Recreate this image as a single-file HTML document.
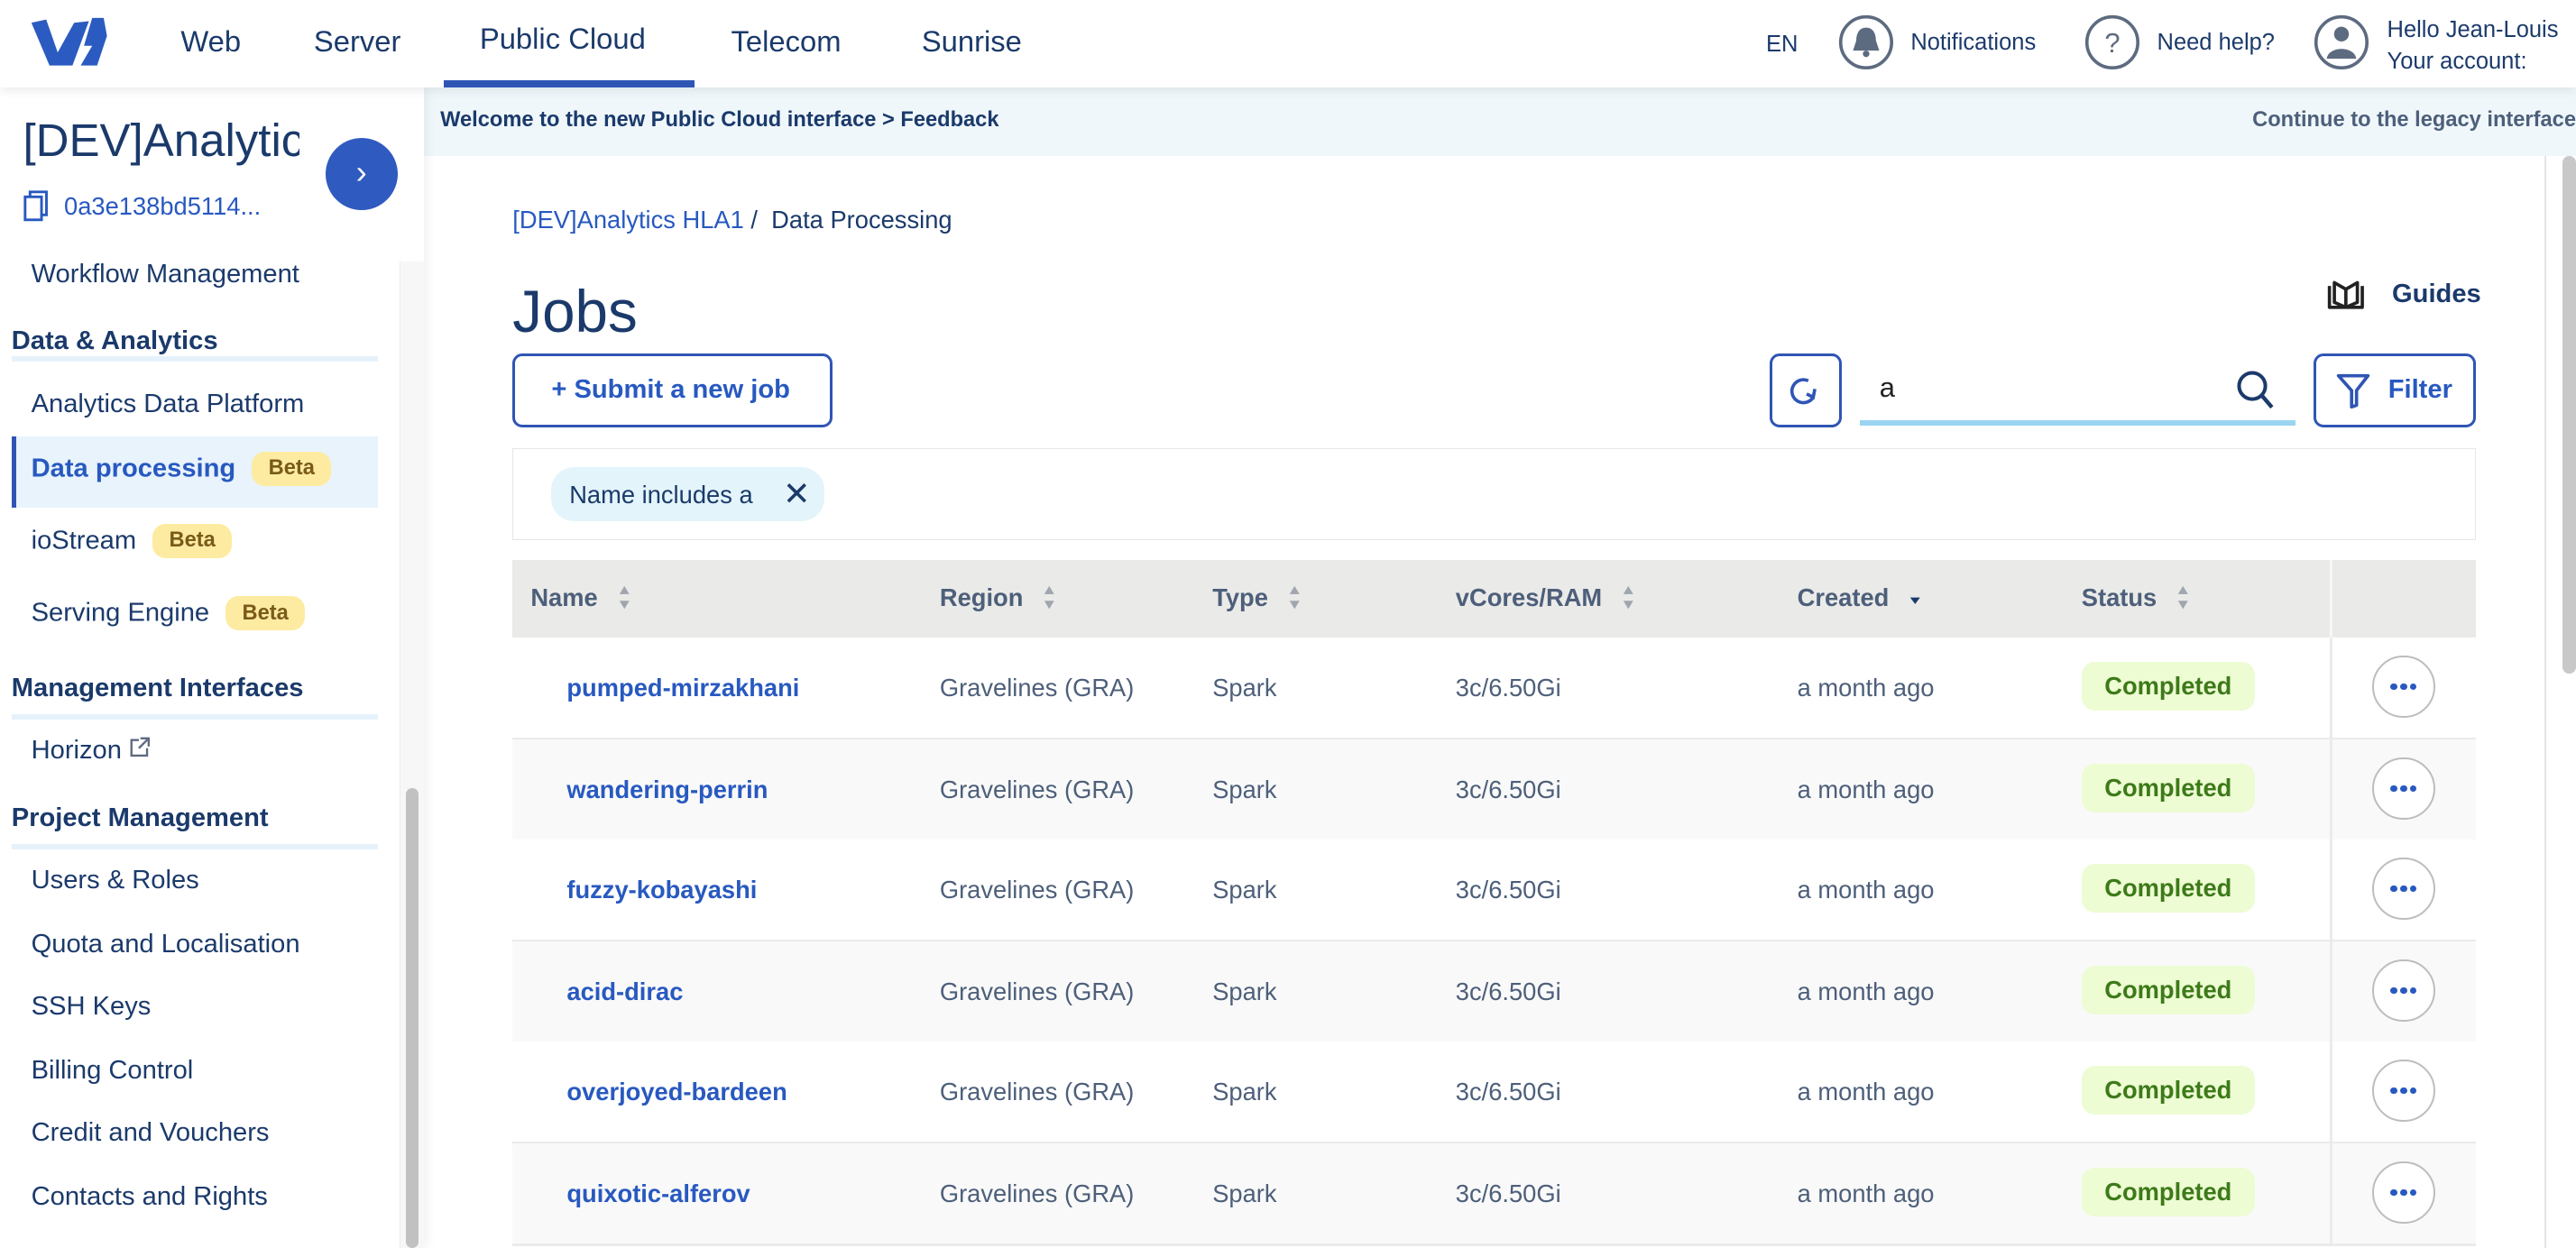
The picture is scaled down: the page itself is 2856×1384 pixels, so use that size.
<!DOCTYPE html>
<html><head><meta charset="utf-8">
<style>
html,body{margin:0;padding:0;}
body{width:2856px;height:1384px;overflow:hidden;background:#fff;font-family:"Liberation Sans",sans-serif;color:#1b3a6b;}
#root{position:relative;width:1568px;height:760px;zoom:1.82143;overflow:hidden;}
.a{position:absolute;white-space:nowrap;}
.nav{top:15px;font-size:18px;color:#1b3a6b;}
.side-h{left:7px;font-size:16px;font-weight:bold;color:#1b3a6b;}
.side-l{left:7px;width:223px;height:3px;background:#e6f2fb;}
.side-i{left:19px;font-size:16px;color:#1b3a6b;}
.beta{display:inline-block;background:#fdeba1;color:#7a5a1a;font-size:13px;font-weight:bold;padding:3px 10px;border-radius:8px;margin-left:10px;vertical-align:1px;}
.th{top:355px;font-size:15px;font-weight:bold;color:#4d5f7a;}
.sort{display:inline-block;width:8px;height:16px;margin-left:12px;vertical-align:-3px;}
.row{position:absolute;left:312px;width:1195px;height:61px;border-bottom:2px solid #ebebeb;}
.row span{position:absolute;top:22px;font-size:15px;color:#4d5f7a;}
.row .n{left:33px;color:#2859c0;font-weight:bold;}
.row .bd{left:955px;top:15px;background:#edfcd3;color:#3d7a19;font-weight:bold;font-size:15px;padding:6px 14px;border-radius:8px;}
.row .sep{left:1106px;top:0;width:2px;height:61px;background:#ebebeb;}
.row .dots{left:1132px;top:11px;width:36px;height:36px;border:1.5px solid #bdbdbd;border-radius:50%;background:#fff;}
.row .dots i{position:absolute;top:16px;width:4px;height:4px;border-radius:50%;background:#2859c0;}
.btn{position:absolute;border:2px solid #2f55b4;border-radius:6px;box-sizing:border-box;}
</style></head><body><div id="root">

<!-- header -->
<div class="a" style="left:0;top:0;width:1568px;height:53px;background:#fff;box-shadow:0 2px 6px rgba(0,0,0,0.08);z-index:3;">
 <svg class="a" style="left:18px;top:10px" width="48" height="32" viewBox="0 0 48 32">
  <path d="M1 4 L10 2 L17 22 L27 4 L36 3 L26 30 L12 30 Z" fill="#2b5bc0"/>
  <path d="M38 1 L45 1 L47 12 L41 30 L31 30 L38 18 L33 18 Z" fill="#2b5bc0"/>
 </svg>
 <div class="a nav" style="left:110px">Web</div>
 <div class="a nav" style="left:191px">Server</div>
 <div class="a nav" style="left:292px;top:13px">Public Cloud</div>
 <div class="a" style="left:270px;top:49px;width:153px;height:4px;background:#2f55b4"></div>
 <div class="a nav" style="left:445px">Telecom</div>
 <div class="a nav" style="left:561px">Sunrise</div>
 <div class="a" style="left:1075px;top:19px;font-size:14px;">EN</div>
 <svg class="a" style="left:1119px;top:9px" width="34" height="34" viewBox="0 0 34 34"><circle cx="17" cy="17" r="15.5" fill="none" stroke="#5d6b80" stroke-width="2"/><path d="M17 8 C12 8 11 13 11 16 L9 22 L25 22 L23 16 C23 13 22 8 17 8Z" fill="#5d6b80"/><circle cx="17" cy="24" r="2" fill="#5d6b80"/></svg>
 <div class="a" style="left:1163px;top:18px;font-size:14px;">Notifications</div>
 <svg class="a" style="left:1269px;top:9px" width="34" height="34" viewBox="0 0 34 34"><circle cx="17" cy="17" r="15.5" fill="none" stroke="#5d6b80" stroke-width="2"/><text x="17" y="23" text-anchor="middle" font-family="Liberation Sans" font-size="17" fill="#5d6b80">?</text></svg>
 <div class="a" style="left:1313px;top:18px;font-size:14px;">Need help?</div>
 <svg class="a" style="left:1408px;top:9px" width="34" height="34" viewBox="0 0 34 34"><circle cx="17" cy="17" r="15.5" fill="none" stroke="#5d6b80" stroke-width="2"/><circle cx="17" cy="12" r="4.5" fill="#5d6b80"/><path d="M8 27 C9 19 25 19 26 27 Z" fill="#5d6b80"/></svg>
 <div class="a" style="left:1453px;top:9px;font-size:14px;line-height:19px;">Hello Jean-Louis<br>Your account:</div>
</div>

<!-- sidebar -->
<div class="a" style="left:0;top:53px;width:258px;height:707px;background:#fff;box-shadow:2px 0 6px rgba(0,0,0,0.06);z-index:2;">
 <div class="a" style="left:14px;top:16px;width:168px;overflow:hidden;font-size:28px;color:#1b3a6b;">[DEV]Analytics</div>
 <div class="a" style="left:198px;top:31px;width:44px;height:44px;border-radius:50%;background:#2f5ac0;color:#fff;text-align:center;line-height:42px;font-size:20px;">&#8250;</div>
 <svg class="a" style="left:14px;top:63px" width="16" height="20" viewBox="0 0 16 20"><rect x="1" y="4" width="10" height="14" fill="none" stroke="#2859c0" stroke-width="1.6"/><path d="M4 4 V1 H14 V15 H11" fill="none" stroke="#2859c0" stroke-width="1.6"/></svg>
 <div class="a" style="left:39px;top:64px;font-size:15px;color:#2859c0;">0a3e138bd5114...</div>
 <div class="a" style="left:0;top:106px;width:243px;height:601px;overflow:hidden;">
  <div class="a side-i" style="top:-1px">Workflow Management</div>
  <div class="a side-h" style="top:40px">Data &amp; Analytics</div>
  <div class="a side-l" style="top:58px"></div>
  <div class="a side-i" style="top:78px">Analytics Data Platform</div>
  <div class="a" style="left:7px;top:107px;width:223px;height:43px;background:#e8f3fb;"></div>
  <div class="a" style="left:7px;top:107px;width:3px;height:43px;background:#2f55b4;"></div>
  <div class="a side-i" style="top:116px;color:#2859c0;font-weight:bold;">Data processing<span class="beta">Beta</span></div>
  <div class="a side-i" style="top:160px">ioStream<span class="beta">Beta</span></div>
  <div class="a side-i" style="top:204px">Serving Engine<span class="beta">Beta</span></div>
  <div class="a side-h" style="top:251px">Management Interfaces</div>
  <div class="a side-l" style="top:276px"></div>
  <div class="a side-i" style="top:289px">Horizon <svg width="13" height="13" viewBox="0 0 13 13" style="vertical-align:0"><path d="M6 2 H1.5 V11.5 H11 V7 M7 1 H12 V6 M12 1 L6 7" fill="none" stroke="#5d6b80" stroke-width="1.3"/></svg></div>
  <div class="a side-h" style="top:330px">Project Management</div>
  <div class="a side-l" style="top:355px"></div>
  <div class="a side-i" style="top:368px">Users &amp; Roles</div>
  <div class="a side-i" style="top:407px">Quota and Localisation</div>
  <div class="a side-i" style="top:445px">SSH Keys</div>
  <div class="a side-i" style="top:484px">Billing Control</div>
  <div class="a side-i" style="top:522px">Credit and Vouchers</div>
  <div class="a side-i" style="top:561px">Contacts and Rights</div>
 </div>
 <div class="a" style="left:243px;top:106px;width:15px;height:601px;background:#f7f7f7;border-left:1px solid #ececec;"></div>
 <div class="a" style="left:247px;top:427px;width:8px;height:280px;background:#c1c1c1;border-radius:4px;"></div>
</div>

<!-- banner -->
<div class="a" style="left:258px;top:53px;width:1310px;height:42px;background:#eff7fb;">
 <div class="a" style="left:10px;top:13px;font-size:13px;font-weight:bold;color:#1b3a6b;">Welcome to the new Public Cloud interface &gt; Feedback</div>
 <div class="a" style="right:0;top:13px;font-size:13px;color:#4d5f7a;font-weight:bold;">Continue to the legacy interface</div>
</div>
<div class="a" style="left:1549px;top:95px;width:1px;height:665px;background:#e5e5e5"></div>
<div class="a" style="left:1560px;top:95px;width:8px;height:315px;background:#c8c8c8;border-radius:4px"></div>

<!-- main -->
<div class="a" style="left:312px;top:125px;font-size:15px;"><span style="color:#2859c0">[DEV]Analytics HLA1</span> / &nbsp;Data Processing</div>
<div class="a" style="left:312px;top:169px;font-size:36px;color:#1b3a6b;">Jobs</div>
<svg class="a" style="left:1416px;top:169px" width="24" height="20" viewBox="0 0 24 20"><path d="M2 5 V18 H22 V5 M5 3 V15 L12 18 L19 15 V3 L12 7 L5 3 Z M12 7 V18" fill="none" stroke="#222" stroke-width="2" stroke-linejoin="round"/></svg>
<div class="a" style="left:1456px;top:170px;font-size:16px;font-weight:bold;">Guides</div>

<div class="btn" style="left:312px;top:215px;width:195px;height:45px;"><div class="a" style="left:22px;top:12px;font-size:16px;font-weight:bold;color:#2859c0;">+ Submit a new job</div></div>
<div class="btn" style="left:1077px;top:215px;width:44px;height:45px;"><svg class="a" style="left:10px;top:11px" width="20" height="20" viewBox="0 0 20 20"><path d="M15 14 A7 7 0 1 1 12 4" fill="none" stroke="#2f55b4" stroke-width="2"/><path d="M16 9 L15 14 L11 12" fill="none" stroke="#2f55b4" stroke-width="2"/></svg></div>
<div class="a" style="left:1144px;top:226px;font-size:17px;color:#222;">a</div>
<div class="a" style="left:1132px;top:256px;width:265px;height:3px;background:#9ad4f0;"></div>
<svg class="a" style="left:1360px;top:224px" width="26" height="26" viewBox="0 0 26 26"><circle cx="11" cy="11" r="8" fill="none" stroke="#1b3a6b" stroke-width="2.2"/><path d="M17 17 L23 24" stroke="#1b3a6b" stroke-width="2.4"/></svg>
<div class="btn" style="left:1408px;top:215px;width:99px;height:45px;"><svg class="a" style="left:12px;top:10px" width="22" height="22" viewBox="0 0 22 22"><path d="M2 2 H20 L13 11 V20 L10 21 V11 Z" fill="none" stroke="#2f55b4" stroke-width="2" stroke-linejoin="round"/></svg><div class="a" style="left:44px;top:12px;font-size:16px;font-weight:bold;color:#2859c0;">Filter</div></div>

<div class="a" style="left:312px;top:273px;width:1195px;height:56px;border:1px solid #e6e6e6;box-sizing:border-box;">
 <div class="a" style="left:23px;top:11px;height:33px;width:166px;background:#e3f4fb;border-radius:14px;">
  <span class="a" style="left:11px;top:8px;font-size:15px;color:#1b3a6b;">Name includes a</span>
  <span class="a" style="left:141px;top:4px;font-size:20px;color:#1b3a6b;">&#x2715;</span>
 </div>
</div>

<div class="a" style="left:312px;top:341px;width:1195px;height:47px;background:#eaeae8;"></div>
<div class="a" style="left:1418px;top:341px;width:2px;height:47px;background:#fff;opacity:.6"></div>
<svg width="0" height="0" style="position:absolute"><defs><symbol id="s" viewBox="0 0 8 16"><path d="M4 1 L7 6 H1Z M4 15 L7 10 H1Z" fill="#a0a6ae"/></symbol></defs></svg>
<div class="a th" style="left:323px">Name<svg class="sort"><use href="#s"/></svg></div>
<div class="a th" style="left:572px">Region<svg class="sort"><use href="#s"/></svg></div>
<div class="a th" style="left:738px">Type<svg class="sort"><use href="#s"/></svg></div>
<div class="a th" style="left:886px">vCores/RAM<svg class="sort"><use href="#s"/></svg></div>
<div class="a th" style="left:1094px">Created<svg class="sort" viewBox="0 0 8 16"><path d="M1 8 H7 L4 12Z" fill="#1b3a6b"/></svg></div>
<div class="a th" style="left:1267px">Status<svg class="sort"><use href="#s"/></svg></div>

<div class="row" style="top:388px;background:#fff"><span class="n">pumped-mirzakhani</span><span style="left:260px">Gravelines (GRA)</span><span style="left:426px">Spark</span><span style="left:574px">3c/6.50Gi</span><span style="left:782px">a month ago</span><span class="bd">Completed</span><span class="sep"></span><span class="dots"><i style="left:10px"></i><i style="left:16px"></i><i style="left:22px"></i></span></div>
<div class="row" style="top:450px;background:#f9f9f9"><span class="n">wandering-perrin</span><span style="left:260px">Gravelines (GRA)</span><span style="left:426px">Spark</span><span style="left:574px">3c/6.50Gi</span><span style="left:782px">a month ago</span><span class="bd">Completed</span><span class="sep"></span><span class="dots"><i style="left:10px"></i><i style="left:16px"></i><i style="left:22px"></i></span></div>
<div class="row" style="top:511px;background:#fff"><span class="n">fuzzy-kobayashi</span><span style="left:260px">Gravelines (GRA)</span><span style="left:426px">Spark</span><span style="left:574px">3c/6.50Gi</span><span style="left:782px">a month ago</span><span class="bd">Completed</span><span class="sep"></span><span class="dots"><i style="left:10px"></i><i style="left:16px"></i><i style="left:22px"></i></span></div>
<div class="row" style="top:573px;background:#f9f9f9"><span class="n">acid-dirac</span><span style="left:260px">Gravelines (GRA)</span><span style="left:426px">Spark</span><span style="left:574px">3c/6.50Gi</span><span style="left:782px">a month ago</span><span class="bd">Completed</span><span class="sep"></span><span class="dots"><i style="left:10px"></i><i style="left:16px"></i><i style="left:22px"></i></span></div>
<div class="row" style="top:634px;background:#fff"><span class="n">overjoyed-bardeen</span><span style="left:260px">Gravelines (GRA)</span><span style="left:426px">Spark</span><span style="left:574px">3c/6.50Gi</span><span style="left:782px">a month ago</span><span class="bd">Completed</span><span class="sep"></span><span class="dots"><i style="left:10px"></i><i style="left:16px"></i><i style="left:22px"></i></span></div>
<div class="row" style="top:696px;background:#f9f9f9"><span class="n">quixotic-alferov</span><span style="left:260px">Gravelines (GRA)</span><span style="left:426px">Spark</span><span style="left:574px">3c/6.50Gi</span><span style="left:782px">a month ago</span><span class="bd">Completed</span><span class="sep"></span><span class="dots"><i style="left:10px"></i><i style="left:16px"></i><i style="left:22px"></i></span></div>

</div></body></html>
